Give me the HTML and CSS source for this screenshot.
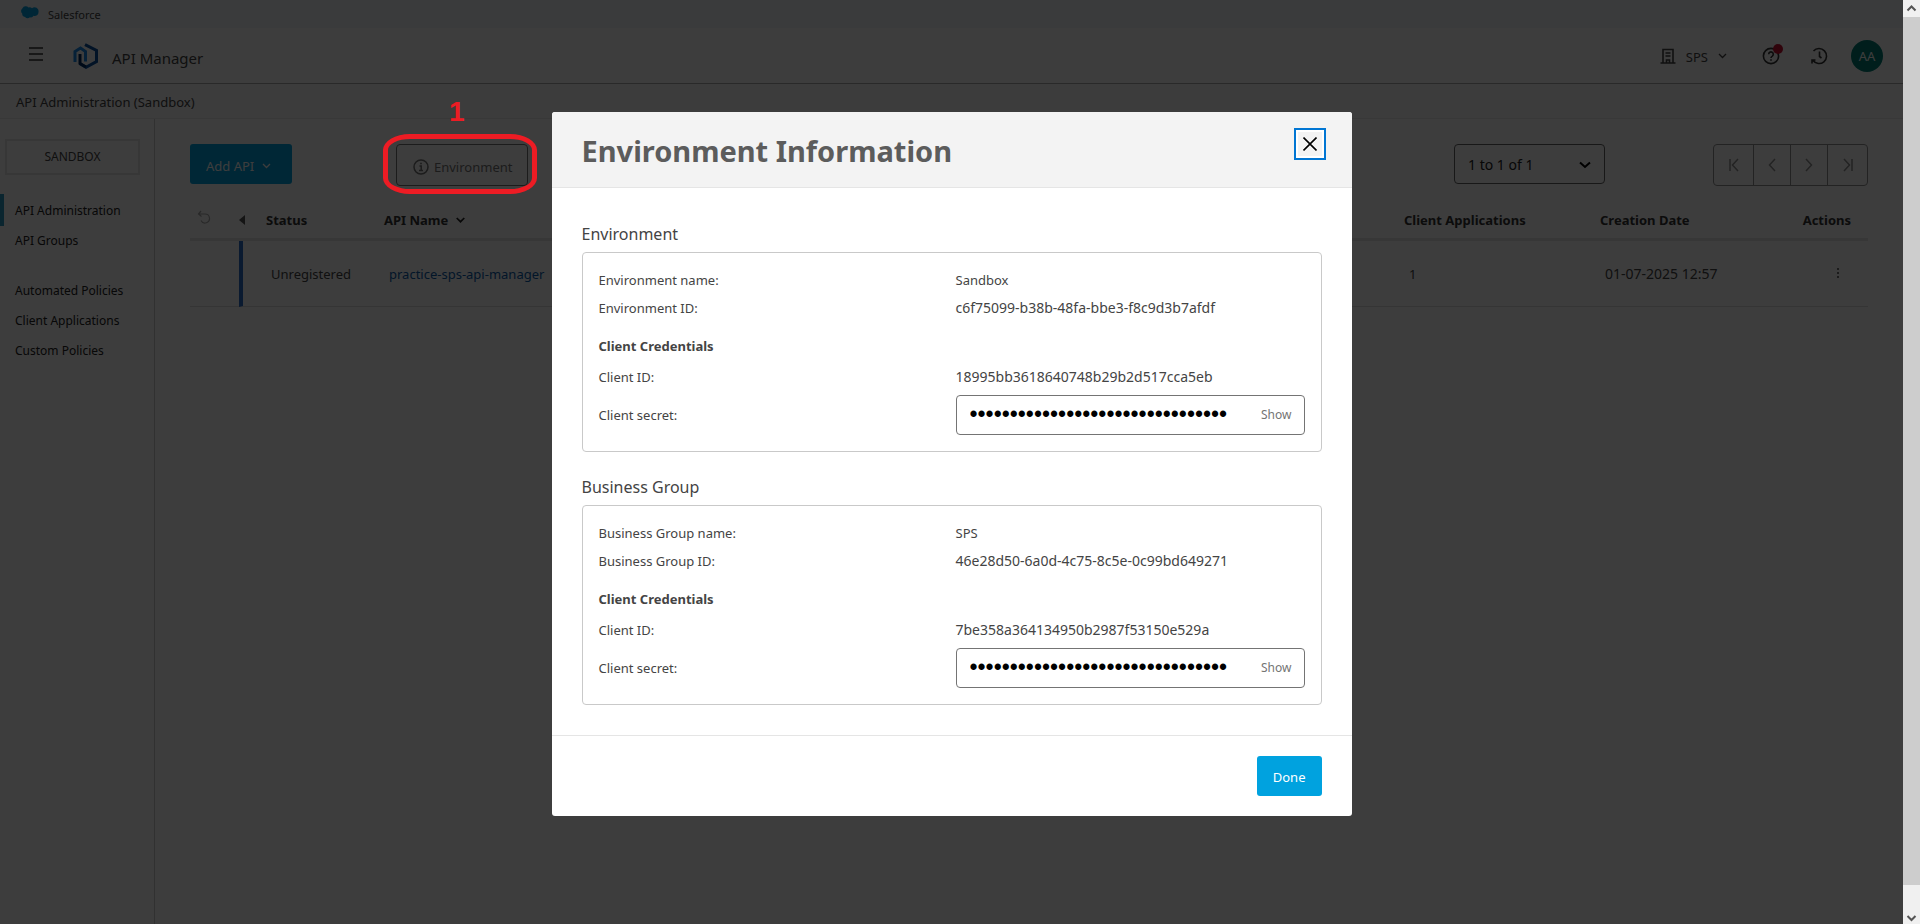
FILE: index.html
```html
<!DOCTYPE html>
<html lang="en">
<head>
<meta charset="utf-8">
<title>API Manager</title>
<link rel="stylesheet" href="styles.css">
</head>
<body>
<div class="app">
  <div class="brand-bar">
    <svg class="cloud" viewBox="0 0 18 13" width="18" height="13"><path fill="#00a1e0" d="M7.500 1.500A3.500 3.500 0 0 1 11 2.200A4 4 0 0 1 17.500 6A3.800 3.800 0 0 1 12.500 9.800A3 3 0 0 1 9 11.200A3.700 3.700 0 0 1 4 11A3.300 3.300 0 0 1 1.200 7.600A3.500 3.500 0 0 1 1.500 2.200A3.600 3.600 0 0 1 7.500 1.500Z"/></svg>
    <span>Salesforce</span>
  </div>
  <header class="top">
    <button class="icon-btn menu-btn" aria-label="Menu"><svg viewBox="0 0 14 14" width="14" height="14" stroke="#333" stroke-width="1.500"><path d="M0 1h14M0 7h14M0 13h14"/></svg></button>
    <svg class="logo" viewBox="0 0 26 26" width="26" height="26" fill="none" stroke-width="3"><path stroke="#0a4f9e" d="M12 1.700L23.500 7.500V18.500L13 24.300L6.500 20.500"/><path stroke="#1b8ae8" d="M2 19V8.500L7.500 5L12.500 8.500V18.500"/><path stroke="#032d60" d="M7 11V20.500L13 24"/></svg>
    <span class="app-name">API Manager</span>
    <div class="top-actions">
      <button class="org-btn">
        <svg viewBox="0 0 16 16" width="16" height="16" fill="none" stroke="#444" stroke-width="1.600"><path d="M.5 15h15M3 15V1.500h10V15M6.500 15v-3h3v3M5.500 5h5M5.500 8h5"/></svg>
        <span>SPS</span>
        <svg viewBox="0 0 8 6" width="9" height="6" fill="none" stroke="#444" stroke-width="1.300"><path d="M.5 1L4 4.500L7.500 1"/></svg>
      </button>
      <button class="icon-btn help-btn" aria-label="Help"><svg viewBox="0 0 18 18" width="18" height="18" fill="none" stroke="#333" stroke-width="1.600"><circle cx="9" cy="9" r="7.600"/><path d="M6.700 7.200a2.300 2.300 0 1 1 3.600 1.900Q9 9.900 9 11M9 12.300v1.400"/></svg><span class="dot"></span></button>
      <button class="icon-btn" aria-label="History"><svg viewBox="0 0 18 18" width="18" height="18" fill="none" stroke="#333" stroke-width="1.600"><path d="M3.500 4A7.500 7.500 0 1 1 3 13.500M9.500 4.500V9.500l2 1.500M5.500 13H2v3.500"/></svg></button>
      <button class="avatar">AA</button>
    </div>
  </header>
  <div class="crumb">API Administration (Sandbox)</div>
  <div class="body">
    <nav class="side">
      <button class="env-switch">SANDBOX</button>
      <a class="active" href="#">API Administration</a>
      <a href="#">API Groups</a>
      <a class="group" href="#">Automated Policies</a>
      <a href="#">Client Applications</a>
      <a href="#">Custom Policies</a>
    </nav>
    <main class="content">
      <div class="toolbar">
        <button class="btn-primary add-api">Add API <svg viewBox="0 0 8 6" width="9" height="6" fill="none" stroke="#fff" stroke-width="1.300"><path d="M.5 1L4 4.500L7.500 1"/></svg></button>
        <button class="btn-outline"><svg viewBox="0 0 16 16" width="16" height="16" fill="none" stroke="#747474" stroke-width="1.500"><circle cx="8" cy="8" r="7"/><path d="M6.500 7h1.700v4.500M6 11.500h4M7.200 4.500h1.600"/></svg>Environment</button>
        <div class="select-wrap">
          <select aria-label="Range"><option>1 to 1 of 1</option></select>
          <svg viewBox="0 0 12 8" width="12" height="8" fill="none" stroke="#000" stroke-width="2"><path d="M1 1.500L6 6L11 1.500"/></svg>
        </div>
        <div class="pager">
          <button aria-label="First"><svg viewBox="0 0 10 14" width="10" height="14"><path d="M1 1v12M9 1L3.500 7L9 13"/></svg></button>
          <button aria-label="Previous"><svg viewBox="0 0 10 14" width="10" height="14"><path d="M8 1L2.500 7L8 13"/></svg></button>
          <button aria-label="Next"><svg viewBox="0 0 10 14" width="10" height="14"><path d="M2 1L7.500 7L2 13"/></svg></button>
          <button aria-label="Last"><svg viewBox="0 0 10 14" width="10" height="14"><path d="M9 1v12M1 1L6.500 7L1 13"/></svg></button>
        </div>
      </div>
      <table>
        <colgroup><col class="c-reset"><col class="c-status"><col><col class="c-apps"><col class="c-date"><col class="c-actions"></colgroup>
        <thead><tr>
          <th class="reset"><svg viewBox="0 0 14 14" width="14" height="14" fill="none" stroke="#aaa" stroke-width="1.200"><path d="M4 1L1.500 4L4.500 6.500M1.500 4H8a4.500 4.500 0 1 1-4 6.500"/></svg></th>
          <th class="status"><svg viewBox="0 0 6 10" width="6" height="10" fill="#555"><path d="M6 0V10L0 5Z"/></svg>Status</th>
          <th><div class="name-head">API Name <svg viewBox="0 0 9 6" width="9" height="6" fill="none" stroke="#222" stroke-width="1.700"><path d="M.7 1L4.500 4.700L8.300 1"/></svg></div></th>
          <th>Client Applications</th>
          <th>Creation Date</th>
          <th class="actions">Actions</th>
        </tr></thead>
        <tbody><tr>
          <td></td>
          <td class="bar">Unregistered</td>
          <td><a href="#">practice-sps-api-manager</a></td>
          <td>1</td>
          <td class="date">01-07-2025 12:57</td>
          <td class="dots"><button class="icon-btn" aria-label="More"><svg viewBox="0 0 2 12" width="2" height="12" fill="#777"><path d="M0 1h2v2H0zM0 5h2v2H0zM0 9h2v2H0z"/></svg></button></td>
        </tr></tbody>
      </table>
    </main>
  </div>
  <div class="overlay">
    <section class="dialog" role="dialog" aria-labelledby="dlg-title">
      <header class="dlg-head">
        <h1 id="dlg-title">Environment Information</h1>
        <button class="close" aria-label="Close"><svg viewBox="0 0 14 14" width="14" height="14" stroke="#000" stroke-width="1.600"><path d="M.5.5l13 13M13.500.5l-13 13"/></svg></button>
      </header>
      <div class="dlg-body">
        <h2>Environment</h2>
        <div class="panel">
          <div class="row"><span>Environment name:</span><span>Sandbox</span></div>
          <div class="row"><span>Environment ID:</span><span class="id">c6f75099-b38b-48fa-bbe3-f8c9d3b7afdf</span></div>
          <h3>Client Credentials</h3>
          <div class="row"><span>Client ID:</span><span class="id">18995bb3618640748b29b2d517cca5eb</span></div>
          <div class="row secret"><label for="env-secret">Client secret:</label><div class="field"><input id="env-secret" type="password" value="00000000000000000000000000000000" readonly><button>Show</button></div></div>
        </div>
        <h2>Business Group</h2>
        <div class="panel">
          <div class="row"><span>Business Group name:</span><span>SPS</span></div>
          <div class="row"><span>Business Group ID:</span><span class="id">46e28d50-6a0d-4c75-8c5e-0c99bd649271</span></div>
          <h3>Client Credentials</h3>
          <div class="row"><span>Client ID:</span><span class="id">7be358a364134950b2987f53150e529a</span></div>
          <div class="row secret"><label for="bg-secret">Client secret:</label><div class="field"><input id="bg-secret" type="password" value="00000000000000000000000000000000" readonly><button>Show</button></div></div>
        </div>
      </div>
      <footer class="dlg-foot"><button class="btn-primary">Done</button></footer>
    </section>
    <div class="callout"></div>
    <div class="callout-num">1</div>
  </div>
</div>
<div class="scrollbar">
  <svg viewBox="0 0 17 17" width="17" height="17" fill="none" stroke="#555" stroke-width="2"><path d="M4.500 10.500L8.500 6.500L12.500 10.500"/></svg>
  <div class="thumb"></div>
  <svg viewBox="0 0 17 17" width="17" height="17" fill="none" stroke="#555" stroke-width="2"><path d="M4.500 9L8.500 13L12.500 9"/></svg>
</div>
</body>
</html>
```

FILE: styles.css
```css
* { box-sizing: border-box; }
body {
  margin: 0;
  display: flex;
  min-height: 100vh;
  font-family: "Noto Sans", "Open Sans", sans-serif;
  font-size: 13px;
  line-height: 20px;
  color: #444;
}
button, select, input { font: inherit; color: inherit; margin: 0; padding: 0; }
button { background: none; border: 0; }
svg { display: block; flex: none; }
a { text-decoration: none; color: inherit; }

.app { position: relative; flex: 1; display: flex; flex-direction: column; background: #fff; min-width: 0; }

.brand-bar { display: flex; align-items: center; gap: 9px; height: 28px; padding: 0 21px; background: #f1f5f9; font-size: 11px; line-height: 28px; }
.brand-bar .cloud { margin-bottom: 4px; }
.brand-bar span { padding-top: 2px; }

.top { display: flex; align-items: center; height: 56px; padding: 0 20px 0 29px; border-bottom: 1px solid #aaa; }
.menu-btn { padding-bottom: 4px; }
.logo { margin-left: 30px; }
.app-name { margin-left: 13px; padding-top: 4px; font-size: 15px; }
.top-actions { display: flex; align-items: center; gap: 30px; margin-left: auto; }
.org-btn { display: flex; align-items: center; gap: 10px; margin-right: 5px; }
.org-btn span { padding-top: 2px; }
.help-btn { position: relative; }
.dot { position: absolute; top: -3px; right: -3px; width: 10px; height: 10px; border-radius: 50%; background: #c8102e; }
.avatar { width: 32px; height: 32px; margin-left: -7px; border-radius: 50%; background: #007f77; color: #fff; }

.crumb { height: 35px; padding: 0 16px; line-height: 36px; background: #f8f8f8; border-bottom: 1px solid #e8e8e8; }

.body { flex: 1; display: flex; }
.side { width: 155px; flex: none; padding-top: 20px; border-right: 1px solid #ccc; display: flex; flex-direction: column; font-size: 12px; }
.env-switch { height: 36px; margin: 0 14px 19px 5px; border: 2px solid #e5e5e5; }
.side a { height: 30px; padding-left: 11px; line-height: 32px; border-left: 4px solid transparent; color: #222; }
.side a.active { border-color: #2b9cc4; height: 32px; margin-bottom: -1px; line-height: 34px; }
.side a.group { margin-top: 20px; }

.content { flex: 1; min-width: 0; padding: 25px 35px 0; }
.toolbar { display: flex; align-items: flex-start; height: 60px; }
.btn-primary { height: 40px; padding: 2px 16px 0; border-radius: 3px; background: #00a2df; color: #fff; }
.add-api { display: flex; align-items: center; gap: 8px; width: 102px; padding-top: 3px; }
.btn-outline { display: flex; align-items: center; gap: 5px; height: 42px; margin-left: 104px; padding: 4px 15px 0 16px; border: 1px solid #747474; border-radius: 4px; color: #747474; }
.select-wrap { position: relative; margin-left: auto; }
.select-wrap select { appearance: none; display: block; width: 151px; height: 40px; padding: 2px 13px 0; border: 1px solid #666; border-radius: 4px; background: transparent; color: #222; font-size: 14px; }
.select-wrap svg { position: absolute; right: 14px; top: 17px; }
.pager { display: flex; margin-left: 108px; border: 1px solid #939393; border-radius: 4px; }
.pager button { display: flex; align-items: center; justify-content: center; width: 37px; height: 40px; border-left: 1px solid #939393; }
.pager button:first-child { width: 39px; border-left: 0; }
.pager button:last-child { width: 40px; }
.pager svg { fill: none; stroke: #939393; stroke-width: 1.5; }

table { width: 100%; table-layout: fixed; border-collapse: separate; border-spacing: 0; }
.c-reset { width: 49px; }
.c-status { width: 140px; }
.c-apps { width: 196px; }
.c-date { width: 173px; }
.c-actions { width: 100px; }
th { height: 37px; padding: 0 0 2px 5px; border-bottom: 3px solid #e5e5e5; text-align: left; color: #333; white-space: nowrap; }
th.reset { padding: 0 0 8px 7px; }
th.status { padding-left: 0; }
th.status svg { display: inline-block; margin-right: 21px; }
.name-head { display: flex; align-items: center; gap: 8px; }
th.actions { padding-right: 17px; text-align: right; }
td { height: 66px; padding: 0 0 0 10px; border-bottom: 1px solid #ddd; }
td.date { font-size: 14px; }
td.bar { padding-left: 28px; border-left: 4px solid #2a6cc8; }
td a { color: #0b5cab; }
td.dots { padding-right: 29px; text-align: right; }

.overlay { position: absolute; inset: 0; display: flex; align-items: center; justify-content: center; padding-top: 3px; background: rgba(0, 0, 0, .76); }
.dialog { width: 800px; max-width: 100%; background: #fff; border-radius: 3px; overflow: hidden; }
.dlg-head { display: flex; justify-content: space-between; align-items: flex-start; padding: 16px 26px 15px 30px; background: #f3f3f3; border-bottom: 1px solid #e5e5e5; }
h1 { margin: 2px 0 0; font-size: 29px; line-height: 42px; color: #5c5c5c; }
.close { display: flex; align-items: center; justify-content: center; width: 32px; height: 32px; border: 2px solid #0176d3; box-shadow: inset 0 0 0 2px #fff; }
.dlg-body { padding: 34px 30px 30px; }
h2 { margin: 0; padding-bottom: 6px; font-size: 16px; line-height: 24px; font-weight: 400; }
.panel { padding: 13px 16px 16px; border: 1px solid #c9c9c9; border-radius: 4px; }
.panel + h2 { margin-top: 23px; }
.row { display: grid; grid-template-columns: 357px minmax(0, 1fr); align-items: center; min-height: 28px; }
.row .id { font-size: 14px; }
.secret { min-height: 40px; margin-top: 4px; }
h3 { margin: 0; font-size: 13px; line-height: 28px; padding: 10px 0 3px; }
.field { display: flex; align-items: center; height: 40px; padding: 0 12px 0 13px; border: 1px solid #747474; border-radius: 4px; }
.field input { flex: 1; min-width: 0; height: 38px; border: 0; outline: 0; background: none; font-family: "Liberation Sans", sans-serif; font-size: 23px; color: #000; }
.field button { font-size: 12px; color: #747474; }
.dlg-foot { display: flex; justify-content: flex-end; padding: 20px 30px; border-top: 1px solid #e5e5e5; }

.callout { position: absolute; left: 383px; top: 134px; width: 154px; height: 60px; border: 5px solid #ed1c24; border-radius: 27px / 16px; }
.callout-num { position: absolute; left: 449px; top: 97px; font-family: "Liberation Sans", sans-serif; font-size: 28px; line-height: 30px; font-weight: 700; color: #ed1c24; }

.scrollbar { width: 17px; flex: none; display: flex; flex-direction: column; background: #f0f0f0; }
.thumb { flex: 1; margin-bottom: 22px; background: #cdcdcd; }
```
